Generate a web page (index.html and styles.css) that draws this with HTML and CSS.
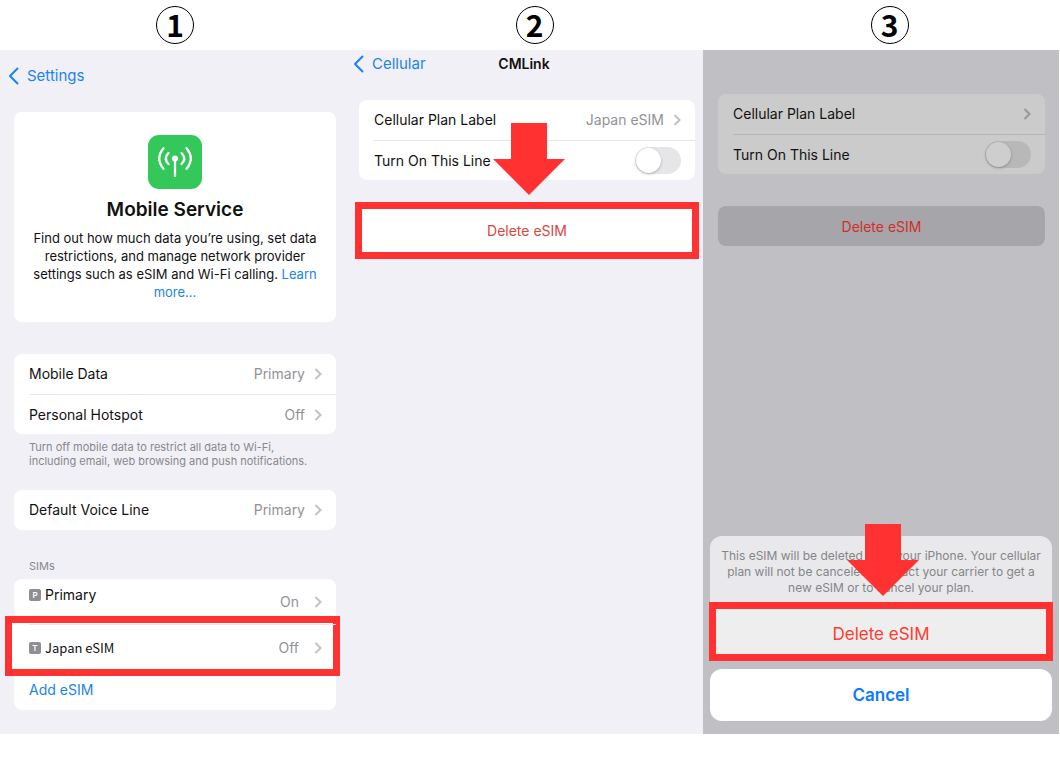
FILE: index.html
```html
<!DOCTYPE html>
<html lang="en">
<head>
    <meta charset="UTF-8">
    <meta name="viewport" content="width=device-width, initial-scale=1.0">
    <title>How to delete an eSIM</title>
    <link rel="stylesheet" href="styles.css">
</head>
<body>
    <main class="steps">
        <!-- Step 1: pick the eSIM -->
        <section class="step">
            <div class="step-header"><span class="step-number">1</span></div>
            <div class="screen screen-service">
                <nav class="navbar">
                    <a class="back" href="#">
                        <svg class="back-icon" viewBox="0 0 11 18"><path d="M9.500 1.500 2 9l7.500 7.500"/></svg>
                        Settings
                    </a>
                </nav>

                <div class="card intro">
                    <svg class="app-icon" viewBox="0 0 54 54">
                        <rect width="54" height="54" rx="11" fill="#34c759"/>
                        <g fill="none" stroke="#fff" stroke-width="2.300" stroke-linecap="round">
                            <path d="M27 25v16"/>
                            <path d="M20.500 18q-5.500 5.500 0 11M33.500 18q5.500 5.500 0 11"/>
                            <path d="M15.500 13.200q-8.500 10.300 0 20.600M38.500 13.200q8.500 10.300 0 20.600"/>
                        </g>
                        <circle cx="27" cy="23.500" r="3" fill="#fff"/>
                    </svg>
                    <h1>Mobile Service</h1>
                    <p>Find out how much data you’re using, set data restrictions, and manage network provider settings such as eSIM and Wi-Fi calling. <a href="#">Learn more...</a></p>
                </div>

                <div class="card">
                    <a class="row" href="#">
                        <span>Mobile Data</span>
                        <span class="value">Primary</span>
                        <svg class="chevron" viewBox="0 0 8 12"><path d="M1.500 1 6.500 6l-5 5"/></svg>
                    </a>
                    <a class="row" href="#">
                        <span>Personal Hotspot</span>
                        <span class="value">Off</span>
                        <svg class="chevron" viewBox="0 0 8 12"><path d="M1.500 1 6.500 6l-5 5"/></svg>
                    </a>
                </div>
                <p class="note">Turn off mobile data to restrict all data to Wi-Fi, including email, web browsing and push notifications.</p>

                <div class="card">
                    <a class="row" href="#">
                        <span>Default Voice Line</span>
                        <span class="value">Primary</span>
                        <svg class="chevron" viewBox="0 0 8 12"><path d="M1.500 1 6.500 6l-5 5"/></svg>
                    </a>
                </div>

                <h2 class="label">SIMs</h2>
                <div class="card sims">
                    <a class="row primary-sim" href="#">
                        <span class="tag">P</span>
                        <span class="sim-name">Primary</span>
                        <span class="value">On</span>
                        <svg class="chevron" viewBox="0 0 8 12"><path d="M1.500 1 6.500 6l-5 5"/></svg>
                    </a>
                    <div class="highlight highlight-sim">
                        <a class="row" href="#">
                            <span class="tag">T</span>
                            <span class="travel-sim">Japan eSIM</span>
                            <span class="value">Off</span>
                            <svg class="chevron" viewBox="0 0 8 12"><path d="M1.500 1 6.500 6l-5 5"/></svg>
                        </a>
                    </div>
                    <a class="row add" href="#">Add eSIM</a>
                </div>
            </div>
        </section>

        <!-- Step 2: delete -->
        <section class="step">
            <div class="step-header"><span class="step-number">2</span></div>
            <div class="screen screen-plan">
                <nav class="navbar">
                    <a class="back" href="#">
                        <svg class="back-icon" viewBox="0 0 11 18"><path d="M9.500 1.500 2 9l7.500 7.500"/></svg>
                        Cellular
                    </a>
                    <h2 class="nav-title">CMLink</h2>
                </nav>

                <div class="card">
                    <a class="row" href="#">
                        <span>Cellular Plan Label</span>
                        <span class="value">Japan eSIM</span>
                        <svg class="chevron" viewBox="0 0 8 12"><path d="M1.500 1 6.500 6l-5 5"/></svg>
                    </a>
                    <div class="row">
                        <label for="line">Turn On This Line</label>
                        <input class="toggle" type="checkbox" id="line">
                    </div>
                </div>

                <div class="highlight highlight-delete">
                    <svg class="arrow" viewBox="0 0 72 72"><path d="M18 0h36v36h18L36 72 0 36h18z"/></svg>
                    <button class="delete">Delete eSIM</button>
                </div>
            </div>
        </section>

        <!-- Step 3: confirm -->
        <section class="step">
            <div class="step-header"><span class="step-number">3</span></div>
            <div class="screen screen-confirm">
                <div class="card">
                    <a class="row" href="#">
                        <span>Cellular Plan Label</span>
                        <span class="value"></span>
                        <svg class="chevron" viewBox="0 0 8 12"><path d="M1.500 1 6.500 6l-5 5"/></svg>
                    </a>
                    <div class="row">
                        <label for="line-dimmed">Turn On This Line</label>
                        <input class="toggle" type="checkbox" id="line-dimmed">
                    </div>
                </div>
                <button class="delete pressed">Delete eSIM</button>

                <div class="sheet">
                    <div class="sheet-main">
                        <p>This eSIM will be deleted from your iPhone. Your cellular plan will not be canceled. Contact your carrier to get a new eSIM or to cancel your plan.</p>
                        <div class="highlight highlight-confirm">
                            <svg class="arrow" viewBox="0 0 72 72"><path d="M18 0h36v36h18L36 72 0 36h18z"/></svg>
                            <button class="confirm">Delete eSIM</button>
                        </div>
                    </div>
                    <button class="cancel">Cancel</button>
                </div>
            </div>
        </section>
    </main>
</body>
</html>
```

FILE: styles.css
```css
* {
    box-sizing: border-box;
}

body {
    margin: 0;
    background: #fff;
    color: #111;
    font-family: Inter, "Liberation Sans", sans-serif;
    font-size: 15px;
    line-height: 20px;
}

h1, h2, p {
    margin: 0;
}

a {
    color: #1a84e8;
    text-decoration: none;
}

button {
    display: block;
    width: 100%;
    padding: 0;
    border: none;
    background: none;
    font-family: inherit;
    cursor: pointer;
}

.steps {
    display: grid;
    grid-template-columns: 350fr 353fr 357fr;
}

.step {
    display: flex;
    flex-direction: column;
}

.step-header {
    display: flex;
    justify-content: center;
    align-items: center;
    height: 50px;
}

.step + .step .step-header {
    padding-left: 16px;
}

.step-number {
    width: 38px;
    height: 38px;
    border: 1px solid #000;
    border-radius: 50%;
    color: #000;
    font-family: "Noto Sans CJK JP", sans-serif;
    font-size: 30px;
    font-weight: 700;
    line-height: 34px;
    text-align: center;
}

.screen {
    flex: 1;
    display: flex;
    flex-direction: column;
    background: #f1f0f6;
}

.screen-service {
    padding: 16px 14px 24px;
}

.screen-plan {
    padding: 4px 8px 24px 9px;
}

.screen-confirm {
    padding: 44px 14px 13px 15px;
    margin-right: 1px;
    background: #c0bfc4;
}

/* navigation bar */
.navbar {
    position: relative;
    display: flex;
    align-items: center;
    margin-left: -6px;
}

.back {
    display: flex;
    align-items: center;
    gap: 8px;
    color: #1a84f0;
}

.back-icon {
    width: 11px;
    height: 18px;
    fill: none;
    stroke: currentColor;
    stroke-width: 2;
    stroke-linecap: round;
    stroke-linejoin: round;
}

.nav-title {
    position: absolute;
    left: 0;
    right: 0;
    font-size: 14px;
    font-weight: 600;
    text-align: center;
    pointer-events: none;
}

/* grouped lists */
.card {
    border-radius: 8px;
    background: #fff;
}

.row {
    display: flex;
    align-items: center;
    height: 40px;
    margin-left: 15px;
    padding-right: 14px;
    color: #111;
    font-size: 14px;
}

.row + .row {
    border-top: 1px solid #e6e6e9;
}

.value {
    margin-left: auto;
    color: #929296;
}

.chevron {
    width: 8px;
    height: 12px;
    margin-left: 9px;
    fill: none;
    stroke: #c2c2c6;
    stroke-width: 2;
}

.intro {
    margin: 26px 0 32px;
    padding: 23px 16px 21px;
    text-align: center;
}

.app-icon {
    display: block;
    width: 54px;
    height: 54px;
    margin: 0 auto 9px;
}

.intro h1 {
    font-size: 19px;
    font-weight: 600;
    line-height: 24px;
}

.intro p {
    margin-top: 7px;
    font-size: 13px;
    line-height: 18px;
}

.note {
    margin: 6px 0 22px;
    padding: 0 15px;
    color: #88888c;
    font-size: 11px;
    line-height: 14px;
}

.label {
    margin: 29px 15px 6px;
    color: #88888c;
    font-size: 11px;
    font-weight: 400;
    line-height: 14px;
}

.primary-sim {
    height: 45px;
}

.primary-sim .tag,
.sim-name {
    margin-bottom: 14px;
}

.tag {
    width: 12px;
    height: 12px;
    margin-right: 4px;
    border-radius: 2px;
    background: #8e8e93;
    color: #fff;
    font-size: 8px;
    font-weight: 600;
    line-height: 12px;
    text-align: center;
}

.travel-sim {
    font-family: "Noto Sans CJK JP", sans-serif;
    font-size: 13px;
}

.sims .value {
    margin-right: 6px;
}

.sims .row.add {
    border: none;
    color: #1a84e8;
}

.toggle {
    appearance: none;
    width: 46px;
    height: 27px;
    margin: 0 0 0 auto;
    padding: 1px;
    border-radius: 14px;
    background: #e6e6e8;
}

.toggle::before {
    content: "";
    display: block;
    width: 25px;
    height: 25px;
    border-radius: 50%;
    background: #fff;
    box-shadow: 0 1px 3px rgba(0, 0, 0, 0.25);
}

.toggle:checked {
    background: #34c759;
}

.toggle:checked::before {
    margin-left: auto;
}

.delete {
    height: 40px;
    border-radius: 8px;
    color: #d9473f;
    font-size: 14px;
}

/* red frames and arrows */
.highlight {
    position: relative;
    z-index: 1;
}

.highlight::before {
    content: "";
    position: absolute;
    z-index: -1;
    border: 7px solid #ff3131;
    background: #fff;
}

.highlight-sim .row {
    height: 46px;
    border-top: 1px solid #e6e6e9;
}

.highlight-sim::before {
    inset: -8px -4px -6px -9px;
}

.highlight-delete {
    margin-top: 30px;
}

.highlight-delete::before {
    inset: -8px -4px -9px;
}

.highlight-confirm::before {
    inset: -2px -1px -1px;
    background: #eeeeef;
}

.arrow {
    position: absolute;
    bottom: calc(100% + 15px);
    left: calc(50% - 34px);
    width: 72px;
    height: 72px;
    fill: #ff3131;
}

.highlight-confirm .arrow {
    bottom: calc(100% + 8px);
}

.screen-plan .card {
    margin-top: 26px;
}

/* dimmed screen with the action sheet */
.screen-confirm .card {
    background: #cbcbcb;
}

.screen-confirm .row + .row {
    border-color: #b7b7ba;
}

.screen-confirm .chevron {
    stroke: #98989b;
}

.screen-confirm .toggle {
    background: #b8b8b9;
}

.screen-confirm .toggle::before {
    background: #cecece;
}

.delete.pressed {
    margin-top: 32px;
    background: #a6a5aa;
    color: #d22f28;
}

.sheet {
    margin: auto -7px 0 -8px;
}

.sheet-main {
    border-radius: 12px;
    background: #e9e9eb;
}

.sheet-main p {
    padding: 12px 8px 8px;
    color: #858588;
    font-size: 12px;
    line-height: 16px;
    text-align: center;
}

.confirm {
    height: 56px;
    padding-top: 4px;
    color: #ff3b30;
    font-size: 17px;
}

.cancel {
    height: 52px;
    margin-top: 9px;
    border-radius: 12px;
    background: #fff;
    color: #0a7aff;
    font-size: 17px;
    font-weight: 600;
}
```
